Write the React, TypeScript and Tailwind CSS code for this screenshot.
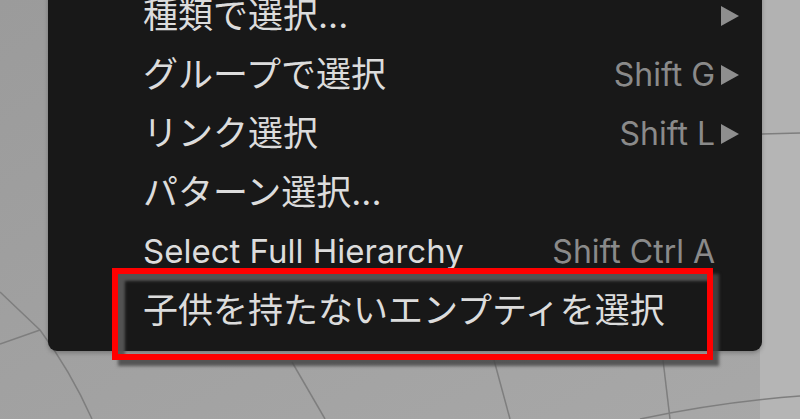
import React from 'react';

interface MenuItem {
  label: React.ReactNode;
  latin?: boolean;
  shortcut?: string;
  submenu?: boolean;
}

const items: MenuItem[] = [
  { label: '種類で選択...', submenu: true },
  { label: 'グループで選択', shortcut: 'Shift G', submenu: true },
  { label: 'リンク選択', shortcut: 'Shift L', submenu: true },
  { label: 'パターン選択...' },
  {
    label: (
      <>
        Select <span className="underline decoration-2 underline-offset-[5px]">F</span>ull Hierarchy
      </>
    ),
    latin: true,
    shortcut: 'Shift Ctrl A',
  },
  { label: '子供を持たないエンプティを選択' },
];

function Viewport() {
  return (
    <svg className="absolute inset-0" width="800" height="419" viewBox="0 0 800 419">
      <defs>
        <linearGradient id="floor" x1="0" y1="0" x2="1" y2="1">
          <stop offset="0" stopColor="#9b9b9b" />
          <stop offset="1" stopColor="#a8a8a8" />
        </linearGradient>
      </defs>
      <rect width="800" height="419" fill="url(#floor)" />
      <rect x="760" y="0" width="40" height="134" fill="#b2b2b2" />
      <rect x="760" y="134" width="40" height="285" fill="#b5b5b5" />
      <g stroke="#7e7e7e" strokeWidth="1.5" fill="none">
        <path d="M760 134 L800 133" />
        <path d="M0 292 L40 330 Q70 370 92 419" />
        <path d="M0 344 L40 330" />
        <path d="M292 362 L325 419" />
        <path d="M494 360 L510 419" />
        <path d="M663 360 L670 419" />
        <path d="M640 419 Q720 402 800 396" />
      </g>
    </svg>
  );
}

function Arrow() {
  return (
    <svg width="20" height="22" viewBox="0 0 20 22" className="shrink-0">
      <path d="M1 1 L19 11 L1 21 Z" fill="#8e8e8e" />
    </svg>
  );
}

export default function App() {
  return (
    <div
      className="relative w-[800px] h-[419px] overflow-hidden bg-[#a0a0a0]"
      style={{ fontFamily: 'Inter, "Noto Sans CJK JP", sans-serif' }}
    >
      <Viewport />

      <div className="absolute left-[48px] top-[-14px] w-[714px] rounded-b-[9px] bg-[#181818] pb-[11px] pl-[95px] pr-[22px] shadow-[0_2px_4px_rgba(0,0,0,0.25)]">
        {items.map((item, i) => (
          <div key={i} className="flex h-[59px] items-center justify-between">
            <span
              className={`leading-none text-[#dcdcdc] whitespace-nowrap ${item.latin ? 'text-[33px]' : 'text-[35px]'}`}
            >
              {item.label}
            </span>
            <div className="flex items-center">
              {item.shortcut && (
                <span className="text-[32px] leading-none text-[#8a8a8a] whitespace-nowrap">{item.shortcut}</span>
              )}
              <div className="flex w-[25px] justify-end">{item.submenu && <Arrow />}</div>
            </div>
          </div>
        ))}
      </div>

      {/* annotation box */}
      <div className="absolute left-[112px] top-[268px] w-[601px] h-[92px] border-[6px] border-[#ff0000] shadow-[6px_6px_3px_rgba(70,70,70,0.85),inset_7px_7px_3px_rgba(85,85,85,0.95)]" />
    </div>
  );
}
